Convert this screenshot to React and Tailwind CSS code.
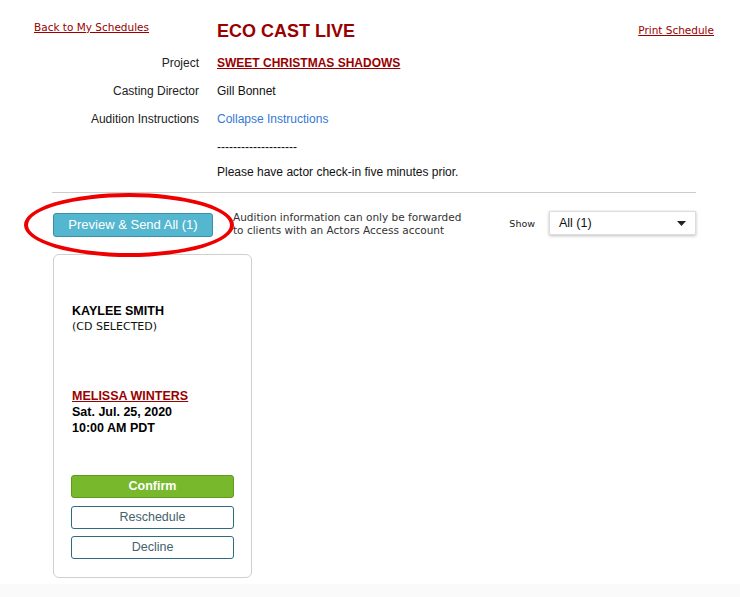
import React from "react";

const InfoRow = ({ label, children }) => (
  <div className="flex items-center h-[28px]">
    <div className="w-[199px] text-right text-[12px] text-[#222]">{label}</div>
    <div className="ml-[18px] text-[12px] text-[#111]">{children}</div>
  </div>
);

export default function App() {
  return (
    <div className="min-h-screen bg-[#fafafa] font-['Liberation_Sans',Arial,sans-serif]">
      <div className="bg-white h-[584px] pt-[18px]">
        {/* header */}
        <div className="flex items-start h-[26px]">
          <div className="ml-[34px] w-[183px] mt-[-4px]">
            <a
              href="#"
              className="text-[10.5px] leading-[18px] text-[#990000] underline font-['DejaVu_Sans',Verdana,sans-serif]"
            >
              Back to My Schedules
            </a>
          </div>
          <h1 className="text-[18px] leading-[26px] font-bold text-[#990000]">ECO CAST LIVE</h1>
          <a
            href="#"
            className="ml-auto mr-[26px] mt-[3px] text-[10.5px] leading-[18px] text-[#990000] underline font-['DejaVu_Sans',Verdana,sans-serif]"
          >
            Print Schedule
          </a>
        </div>

        <div className="mt-[5px]">
          <InfoRow label="Project">
            <a href="#" className="font-bold text-[#990000] underline">
              SWEET CHRISTMAS SHADOWS
            </a>
          </InfoRow>
          <InfoRow label="Casting Director">Gill Bonnet</InfoRow>
          <InfoRow label="Audition Instructions">
            <a href="#" className="text-[#3478d4]">
              Collapse Instructions
            </a>
          </InfoRow>
          <InfoRow label="">--------------------</InfoRow>
          <div className="flex items-center h-[22px]">
            <div className="ml-[217px] text-[12px] text-[#111]">
              Please have actor check-in five minutes prior.
            </div>
          </div>
        </div>

        <div className="ml-[52px] w-[644px] mt-[9px] border-t border-[#cccccc]" />

        {/* actions row */}
        <div className="flex items-start mt-[17px] h-[26px]">
          <div className="relative ml-[53px] mt-[2px]">
            <button className="w-[160px] h-[24px] rounded-[3px] bg-[#55b6d0] border border-[#3a8fa9] text-white text-[13px]">
              Preview &amp; Send All (1)
            </button>
            <div className="absolute left-[-29px] top-[-19px] w-[210px] h-[64px] rounded-[50%] border-[4px] border-[#ee0000] pointer-events-none" />
          </div>
          <div className="ml-[20px] mt-[1px] text-[10.5px] leading-[13px] text-[#333] font-['DejaVu_Sans',Verdana,sans-serif]">
            Audition information can only be forwarded
            <br />
            to clients with an Actors Access account
          </div>
          <div className="ml-auto mr-[44px] mt-[1px] flex items-center">
            <span className="mt-[3px] text-[9.5px] text-[#222] font-['DejaVu_Sans',Verdana,sans-serif]">Show</span>
            <div className="ml-[14px] w-[147px] h-[24px] flex items-center px-[9px] border border-[#dddddd] shadow-[0_1px_3px_rgba(0,0,0,0.25)] bg-white">
              <span className="text-[12.5px] text-[#111]">All (1)</span>
              <svg className="ml-auto" width="9" height="5" viewBox="0 0 9 5">
                <path d="M0 0h9L4.5 5z" fill="#222" />
              </svg>
            </div>
          </div>
        </div>

        {/* card */}
        <div className="ml-[53px] mt-[18px] w-[199px] h-[324px] rounded-[6px] border border-[#cfcfcf] px-[17px] pt-[49px] flex flex-col">
          <div className="pl-[1px] text-[12.5px] leading-[15px] font-bold text-black">KAYLEE SMITH</div>
          <div className="pl-[1px] text-[11px] leading-[15px] text-[#111] font-['DejaVu_Sans',Verdana,sans-serif]">
            (CD SELECTED)
          </div>
          <div className="mt-[55px] pl-[1px]">
            <a href="#" className="block text-[12.5px] leading-[15px] font-bold text-[#990000] underline">
              MELISSA WINTERS
            </a>
            <div className="text-[12.5px] leading-[16px] font-bold text-black">Sat. Jul. 25, 2020</div>
            <div className="text-[12.5px] leading-[16px] font-bold text-black">10:00 AM PDT</div>
          </div>
          <div className="mt-[39px] flex flex-col">
            <button className="h-[23px] rounded-[3px] bg-[#77b82d] border border-[#5f9a1f] text-white text-[12.5px] font-bold">
              Confirm
            </button>
            <button className="mt-[8px] h-[23px] rounded-[3px] bg-white border border-[#2e6b80] text-[#44626c] text-[12.5px]">
              Reschedule
            </button>
            <button className="mt-[7px] h-[23px] rounded-[3px] bg-white border border-[#2e6b80] text-[#44626c] text-[12.5px]">
              Decline
            </button>
          </div>
        </div>
      </div>
    </div>
  );
}
